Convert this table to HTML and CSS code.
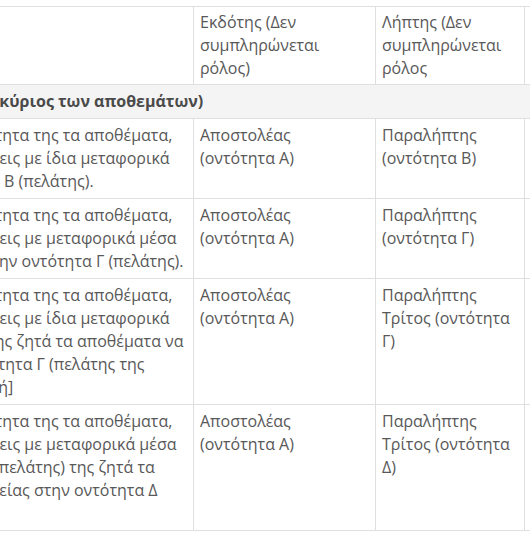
FILE: index.html
```html
<!DOCTYPE html>
<html lang="el">
<head>
<meta charset="utf-8">
<title>Διακίνηση αποθεμάτων</title>
<link rel="stylesheet" href="styles.css">
</head>
<body>
<div class="frame">
<table class="grid">
<colgroup>
<col class="c-scenario">
<col class="c-issuer">
<col class="c-receiver">
<col class="c-extra">
</colgroup>
<tbody>
<tr class="head">
<td><span class="line">Σενάριο</span></td>
<td>Εκδότης (Δεν συμπληρώνεται ρόλος)</td>
<td>Λήπτης (Δεν συμπληρώνεται ρόλος</td>
<td>Μεταφορέας</td>
</tr>
<tr class="group">
<td colspan="4"><span class="line">&ensp;&ensp;&ensp;Α. (Ο αποστολέας είναι ο κύριος των αποθεμάτων)</span></td>
</tr>
<tr>
<td>
<span class="line">&thinsp;Η οντότητα Α έχει στην κυριότητα της τα αποθέματα,</span>
<span class="line">&emsp;&thinsp;&#8202;&#8202;(ο πωλητής) και τα μεταφέρεις με ίδια μεταφορικά</span>
<span class="line">&ensp;&ensp;&thinsp;μέσα ευθέως στην οντότητα Β (πελάτης).</span>
</td>
<td>Αποστολέας (οντότητα Α)</td>
<td>Παραλήπτης (οντότητα Β)</td>
<td>—</td>
</tr>
<tr>
<td>
<span class="line">&thinsp;Η οντότητα Α έχει στην κυριότητα της τα αποθέματα,</span>
<span class="line">&emsp;&thinsp;&#8202;&#8202;(ο πωλητής) και τα μεταφέρεις με μεταφορικά μέσα</span>
<span class="line">&emsp;&emsp;&ensp;&ensp;&ensp;&thinsp;&#8202;τρίτου (μεταφορέα) στην οντότητα Γ (πελάτης).</span>
</td>
<td>Αποστολέας (οντότητα Α)</td>
<td>Παραλήπτης (οντότητα Γ)</td>
<td>Μεταφορέας</td>
</tr>
<tr>
<td>
<span class="line">&thinsp;Η οντότητα Α έχει στην κυριότητα της τα αποθέματα,</span>
<span class="line">&emsp;&thinsp;&#8202;&#8202;(ο πωλητής) και τα μεταφέρεις με ίδια μεταφορικά</span>
<span class="line">&ensp;&ensp;&thinsp;&#8202;στην οντότητα Β, η οποία της ζητά τα αποθέματα να</span>
<span class="line">&#8202;σταλούν απευθείας στην οντότητα Γ (πελάτης της</span>
<span class="line">&emsp;&emsp;&emsp;&#8196;&#8202;οντότητας Β) [τριγωνική]</span>
</td>
<td>Αποστολέας (οντότητα Α)</td>
<td>Παραλήπτης Τρίτος (οντότητα Γ)</td>
<td>—</td>
</tr>
<tr>
<td>
<span class="line">&thinsp;Η οντότητα Α έχει στην κυριότητα της τα αποθέματα,</span>
<span class="line">&emsp;&thinsp;&#8202;&#8202;(ο πωλητής) και τα μεταφέρεις με μεταφορικά μέσα</span>
<span class="line">&emsp;&ensp;&ensp;&thinsp;&thinsp;&#8202;&#8202;τρίτου στην οντότητα Β (πελάτης) της ζητά τα</span>
<span class="line">&thinsp;αποθέματα να σταλούν απευθείας στην οντότητα Δ</span>
<span class="line">(πελάτης της Β).</span>
</td>
<td>Αποστολέας (οντότητα Α)</td>
<td>Παραλήπτης Τρίτος (οντότητα Δ)</td>
<td>Μεταφορέας</td>
</tr>
</tbody>
</table>
</div>
</body>
</html>
```
FILE: styles.css
```css
html, body {
  margin: 0;
  padding: 0;
  background: #fff;
}
body {
  font-family: "Open Sans", "Noto Sans", sans-serif;
  font-size: 16px;
  line-height: 23px;
  color: #585858;
}
.frame {
  width: 530px;
  overflow: hidden;
  padding-top: 6px;
}
.grid {
  border-collapse: collapse;
  table-layout: fixed;
  width: 960px;
  margin-left: -236px;
}
.c-scenario { width: 429px; }
.c-issuer { width: 182px; }
.c-receiver { width: 149px; }
.c-extra { width: 200px; }
.grid td {
  border: 1px solid #dfdfdf;
  padding: 5px 6px;
  vertical-align: top;
}
.grid .head td {
  padding: 4px 6px;
}
.grid .group td {
  background: #f4f4f4;
  font-weight: 700;
  color: #4a4a4a;
}
.line {
  display: block;
  white-space: nowrap;
}
```
